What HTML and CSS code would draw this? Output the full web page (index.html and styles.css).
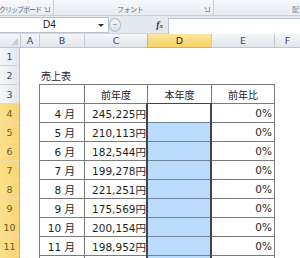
FILE: index.html
```html
<!DOCTYPE html>
<html lang="ja">
<head>
<meta charset="utf-8">
<title>売上表</title>
<link rel="stylesheet" href="styles.css">
</head>
<body>
<div class="app">
  <div class="ribbon">
    <div class="grp g1"><span class="glabel">クリップボード</span><span class="launch"></span></div>
    <div class="grp g2"><span class="glabel">フォント</span><span class="launch"></span></div>
    <div class="grp g3"><span class="glabel">配</span></div>
  </div>
  <div class="fbar">
    <div class="namebox"><span class="nbtext">D4</span><span class="nbarrow"></span></div>
    <div class="grip"><span class="gripdash"></span></div>
    <div class="fxwrap"><span class="fx">f<span class="fxx">x</span></span></div>
    <div class="finput"></div>
  </div>
  <div class="sheet">
    <div class="corner"><span class="tri"></span></div>
    <div class="ch">A</div><div class="ch">B</div><div class="ch">C</div><div class="ch sel">D</div><div class="ch">E</div><div class="ch">F</div>

    <div class="rh first">1</div><div class="c"></div><div class="c"></div><div class="c"></div><div class="c"></div><div class="c"></div><div class="c"></div>

    <div class="rh">2</div><div class="c"></div><div class="c title">売上表</div><div class="c"></div><div class="c"></div><div class="c"></div><div class="c"></div>

    <div class="rh">3</div><div class="c"></div><div class="t"></div><div class="t m">前年度</div><div class="t m">本年度</div><div class="t m">前年比</div><div class="tf"></div>

    <div class="rh sel">4</div><div class="c"></div><div class="t mon">4 月</div><div class="t amt">245,225円</div><div class="t act"></div><div class="t pct">0%</div><div class="tf"></div>
    <div class="rh sel">5</div><div class="c"></div><div class="t mon">5 月</div><div class="t amt">210,113円</div><div class="t blue"></div><div class="t pct">0%</div><div class="tf"></div>
    <div class="rh sel">6</div><div class="c"></div><div class="t mon">6 月</div><div class="t amt">182,544円</div><div class="t blue"></div><div class="t pct">0%</div><div class="tf"></div>
    <div class="rh sel">7</div><div class="c"></div><div class="t mon">7 月</div><div class="t amt">199,278円</div><div class="t blue"></div><div class="t pct">0%</div><div class="tf"></div>
    <div class="rh sel">8</div><div class="c"></div><div class="t mon">8 月</div><div class="t amt">221,251円</div><div class="t blue"></div><div class="t pct">0%</div><div class="tf"></div>
    <div class="rh sel">9</div><div class="c"></div><div class="t mon">9 月</div><div class="t amt">175,569円</div><div class="t blue"></div><div class="t pct">0%</div><div class="tf"></div>
    <div class="rh sel">10</div><div class="c"></div><div class="t mon">10 月</div><div class="t amt">200,154円</div><div class="t blue"></div><div class="t pct">0%</div><div class="tf"></div>
    <div class="rh sel">11</div><div class="c"></div><div class="t mon">11 月</div><div class="t amt">198,952円</div><div class="t blue"></div><div class="t pct">0%</div><div class="tf"></div>
    <div class="rh sel"></div><div class="c"></div><div class="t"></div><div class="t"></div><div class="t blue"></div><div class="t"></div><div class="tf"></div>

    <div class="selbox"></div>
  </div>
</div>
</body>
</html>
```
FILE: styles.css
```css
* { box-sizing: border-box; margin: 0; padding: 0; }
html, body { width: 300px; height: 258px; overflow: hidden; background: #ffffff; }
body { font-family: "DejaVu Sans", "Noto Sans CJK JP", sans-serif; color: #1e1e1e; }

.app { width: 300px; height: 258px; display: flex; flex-direction: column; overflow: hidden; }

/* ribbon */
.ribbon {
  height: 16px; flex: none; display: flex; overflow: hidden;
  background: linear-gradient(#f7f9fb, #e7ecf2);
  border-bottom: 1px solid #c6ced8;
  font-family: "Noto Sans CJK JP", sans-serif; font-size: 7px; line-height: 9px; color: #5d6b7e;
}
.glabel { white-space: nowrap; flex: none; }
.grp { height: 15px; display: flex; align-items: center; border-right: 1px solid #cbd2dc; flex: none; padding-top: 4px; }
.g1 { width: 54px; }
.g1 .glabel { letter-spacing: -1px; margin-left: -1px; }
.g1 .launch { margin-left: auto; margin-right: 3px; }
.g2 { width: 160px; }
.g2 .glabel { margin-left: 63px; letter-spacing: -0.4px; }
.g2 .launch { margin-left: auto; margin-right: 3px; }
.g3 { flex: 1; border-right: none; justify-content: flex-end; }
.g3 .glabel { margin-right: 1px; color: #7d8898; }
.launch {
  width: 5px; height: 5px; flex: none; border-right: 1px solid #8c97a6; border-bottom: 1px solid #8c97a6;
  position: relative;
}
.launch::after {
  content: ""; position: absolute; left: 0; top: 0; width: 3px; height: 1px; background: #8c97a6;
  transform: rotate(45deg); transform-origin: 0 0;
}

/* formula bar */
.fbar {
  height: 18px; flex: none; display: flex; align-items: center;
  background: #e4e9ef; border-bottom: 1px solid #cfd6df;
}
.namebox {
  width: 110px; height: 16px; margin-left: -1px; background: #fff; border: 1px solid #b9c2ce;
  display: flex; align-items: center; position: relative;
}
.nbtext { font-family: "Liberation Sans", sans-serif; font-size: 10px; color: #222; margin-left: 43px; }
.nbarrow {
  position: absolute; right: 4px; top: 6px; width: 0; height: 0;
  border-left: 3px solid transparent; border-right: 3px solid transparent; border-top: 3px solid #333;
}
.grip {
  width: 12px; height: 14px; border-radius: 50%;
  border: 1px solid #b4bdc9; background: linear-gradient(#f3f5f8, #dde3ea);
  display: flex; align-items: center; justify-content: center;
}
.gripdash { width: 4px; height: 1px; background: #9aa5b3; }
.fxwrap { width: 47px; display: flex; justify-content: flex-end; padding-right: 5px; align-items: center; }
.fx { font-family: "Liberation Serif", serif; font-style: italic; font-weight: bold; font-size: 10px; color: #3a3a3a; }
.fxx { font-size: 7px; }
.finput { flex: 1; height: 16px; margin-top: 2px; background: #fff; border-left: 1px solid #b9c2ce; border-top: 1px solid #b9c2ce; }

/* sheet */
.sheet {
  position: relative; flex: none;
  display: grid;
  grid-template-columns: 20px 19px 45px 63px 64px 63px 26px;
  grid-template-rows: 14px 17px repeat(11, 19px);
  font-size: 10.5px;
}
.corner {
  background: linear-gradient(#f6f7f9, #e2e6eb);
  border-bottom: 1px solid #bfc6cf; position: relative;
}
.tri {
  position: absolute; right: 2px; bottom: 2px; width: 0; height: 0;
  border-left: 7px solid transparent; border-bottom: 7px solid #c9ced6;
}
.ch {
  background: linear-gradient(#f6f7f9, #e1e5ea);
  border-left: 1px solid #c4cad2; border-bottom: 1px solid #bfc6cf;
  display: flex; align-items: center; justify-content: center;
  font-size: 9.5px; color: #3c4a5c;
}
.ch.sel {
  background: linear-gradient(#fbe69c, #f7d266);
  border-left-color: #e0b54d; border-bottom: 1px solid #f0a83a; color: #2f2a1c;
}
.rh {
  background: linear-gradient(90deg, #f4f6f8, #e4e8ed);
  border-top: 1px solid #cfd5dc; border-right: 1px solid #bfc6cf;
  display: flex; align-items: center; justify-content: center;
  font-size: 9.5px; color: #3c4a5c;
}
.rh.first { border-top: none; }
.rh.sel {
  background: linear-gradient(90deg, #fbe08a, #f8d577);
  border-top-color: #f0dca6; border-right-color: #e9a846; color: #6a5a34;
}

.c { background: #fff; }
.title { white-space: nowrap; display: flex; align-items: center; padding-left: 2px; padding-top: 1px; font-size: 10px; }

.t {
  background: #fff;
  border-left: 1px solid #7b7b7b; border-top: 1px solid #7b7b7b;
  display: flex; align-items: center; white-space: nowrap; overflow: hidden;
}
.tf { background: #fff; border-left: 1px solid #7b7b7b; }
.m { justify-content: center; font-size: 10px; color: #222; }
.mon { justify-content: flex-end; padding-right: 9px; }
.amt { justify-content: flex-end; padding-right: 1px; }
.pct { justify-content: flex-end; padding-right: 2px; }
.blue { background: #bcdcfb; border-top-color: #6d8297; }
.act { background: #fff; }

/* selection outline over D4:D12 */
.selbox {
  position: absolute; left: 146px; top: 69px; width: 66px; height: 200px;
  border: 2px solid #454545; border-top-width: 1px; pointer-events: none;
}
```
